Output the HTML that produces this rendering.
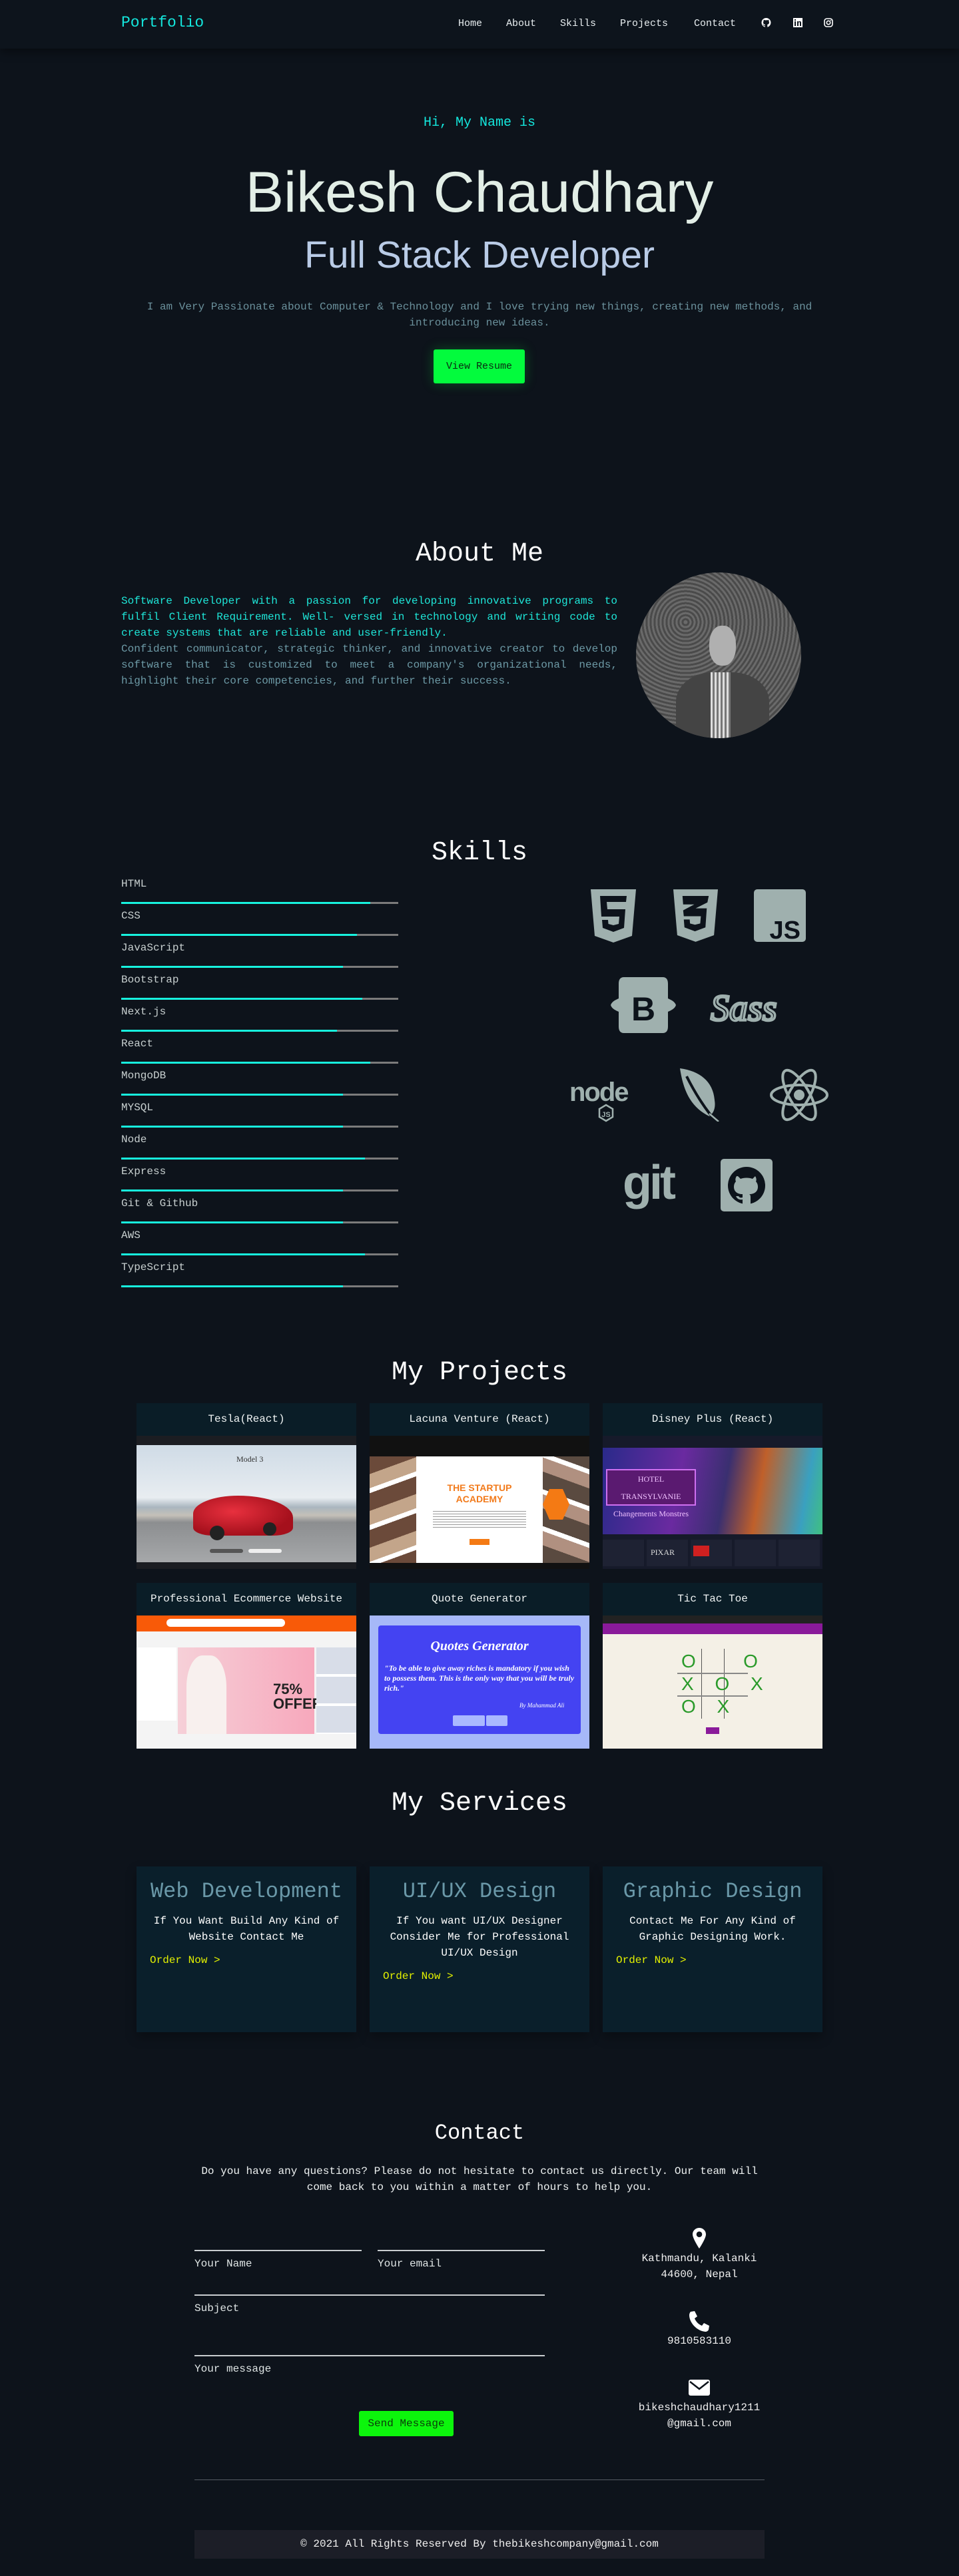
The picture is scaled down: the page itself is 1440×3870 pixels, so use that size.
<!DOCTYPE html>
<html><head><meta charset="utf-8"><style>
*{margin:0;padding:0;box-sizing:border-box}
body{width:1440px;height:3870px;background:#0d131b;position:relative;overflow:hidden;font-family:"Liberation Mono",monospace;color:#fff}
#w{position:absolute;left:0;top:3px;width:1440px;height:3867px}
.a{position:absolute}
.c{text-align:center}
nav{position:absolute;left:0;top:-3px;width:1440px;height:73px;background:#0d141c;box-shadow:0 4px 14px rgba(0,0,0,.45)}
nav .l{position:absolute;top:27px;font-size:15px;color:#e8eef0}
.h2{position:absolute;left:0;width:1440px;text-align:center;font-size:40px;color:#fff;line-height:1}
.lab{position:absolute;left:182px;font-size:16px;color:#c8d0d0;line-height:1}
.bar{position:absolute;left:182px;width:416px;height:3px;background:#7b7b7b}
.bar i{display:block;height:3px;background:#17f2de}
.card{position:absolute;width:330px;background:#0a1d27;overflow:hidden}
.card .t{height:49px;line-height:49px;text-align:center;font-size:16px;color:#f0f4f4}
.card .im{position:absolute;left:0;top:49px;width:330px;height:200px;overflow:hidden}
.sv{position:absolute;width:330px;height:249px;background:#0a1f2b;text-align:center;box-shadow:0 8px 16px rgba(0,0,0,.3)}
.sv h3{font-weight:normal;font-size:32px;color:#6a98a8;margin-top:20px;line-height:36px}
.sv p{font-size:16px;line-height:24px;color:#fff;margin:14px 20px 0}
.sv .o{text-align:left;color:#e3f000;font-size:16px;margin:14px 0 0 20px}
.ul{position:absolute;height:2px;background:#c9cdd0}
.fl{position:absolute;font-size:16px;color:#dfe5e5}
.ri{position:absolute;left:900px;width:300px;text-align:center;font-size:16px;line-height:24px;color:#f0f0f0}
</style></head><body><div id="w">

<nav>
<div class="a" style="left:182px;top:21px;font-size:23px;color:#14e6dc">Portfolio</div>
<div class="l" style="left:688px">Home</div>
<div class="l" style="left:760px">About</div>
<div class="l" style="left:841px">Skills</div>
<div class="l" style="left:931px">Projects</div>
<div class="l" style="left:1042px">Contact</div>
<svg class="a" style="left:1143px;top:27px" width="15" height="14" viewBox="0 0 16 16"><path fill="#fff" d="M8 0a8 8 0 0 0-2.5 15.6c.4 0 .5-.2.5-.4v-1.5C3.8 14.2 3.3 12.7 3.3 12.7c-.4-.9-.9-1.2-.9-1.2-.7-.5.1-.5.1-.5.8.1 1.2.8 1.200.8.7 1.300 1.900.9 2.300.7.1-.5.3-.9.5-1.1-1.8-.2-3.6-.9-3.6-4 0-.9.3-1.600.8-2.100-.1-.2-.4-1 .1-2.100 0 0 .7-.2 2.200.8a7.600 7.600 0 0 1 4 0c1.500-1 2.200-.8 2.200-.8.4 1.100.2 1.900.1 2.100.5.6.8 1.300.8 2.100 0 3.100-1.900 3.800-3.600 4 .3.3.6.8.6 1.500v2.200c0 .2.1.5.6.4A8 8 0 0 0 8 0z"/></svg>
<svg class="a" style="left:1191px;top:27px" width="14" height="14" viewBox="0 0 14 14"><rect width="14" height="14" fill="#fff"/><rect x="2" y="5" width="2" height="7" fill="#0d141c"/><rect x="2" y="2" width="2" height="2" fill="#0d141c"/><path d="M6 5h2v1c.5-.8 1.300-1.100 2-1.100 1.500 0 2 1 2 2.600V12h-2V7.300c0-.7-.3-1-.9-1S8 6.800 8 7.500V12H6z" fill="#0d141c"/></svg>
<svg class="a" style="left:1237px;top:27px" width="14" height="14" viewBox="0 0 14 14"><rect x="1" y="1" width="12" height="12" rx="3.5" fill="none" stroke="#fff" stroke-width="1.6"/><circle cx="7" cy="7" r="2.7" fill="none" stroke="#fff" stroke-width="1.6"/><circle cx="10.4" cy="3.6" r=".8" fill="#fff"/></svg>
</nav>

<div class="a c" style="left:0;width:1440px;top:170px;font-size:20px;color:#14e6dc">Hi, My Name is</div>
<div class="a c" style="left:0;width:1440px;top:236px;font-family:'Liberation Sans',sans-serif;font-size:86px;color:#e2eee6;line-height:100px">Bikesh Chaudhary</div>
<div class="a c" style="left:0;width:1440px;top:345px;font-family:'Liberation Sans',sans-serif;font-size:57px;color:#b9cbe6;line-height:70px">Full Stack Developer</div>
<div class="a c" style="left:200px;width:1040px;top:446px;font-size:16px;line-height:24px;color:#6b919c">I am Very Passionate about Computer &amp; Technology and I love trying new things, creating new methods, and introducing new ideas.</div>
<div class="a" style="left:651px;top:522px;width:137px;height:51px;background:#03fb3d;border-radius:3px;box-shadow:0 0 18px rgba(3,251,61,.25);text-align:center;line-height:51px;font-size:15px;color:#0b2a12">View Resume</div>

<div class="h2" style="top:810px">About Me</div>
<div class="a" style="left:182px;top:888px;width:745px;font-size:16px;line-height:24px;text-align:justify;color:#1ee6d8">Software Developer with a passion for developing innovative programs to fulfil Client Requirement. Well- versed in technology and writing code to create systems that are reliable and user-friendly.</div>
<div class="a" style="left:182px;top:960px;width:745px;font-size:16px;line-height:24px;text-align:justify;color:#6d9aa6">Confident communicator, strategic thinker, and innovative creator to develop software that is customized to meet a company's organizational needs, highlight their core competencies, and further their success.</div>
<div class="a" style="left:955px;top:857px;width:248px;height:249px;border-radius:50%;overflow:hidden;background:repeating-radial-gradient(circle at 30% 30%,#6a6a6a 0 3px,#4a4a4a 3px 6px)">
 <div class="a" style="left:110px;top:80px;width:40px;height:60px;border-radius:45%;background:#b0b0b0"></div>
 <div class="a" style="left:60px;top:150px;width:140px;height:110px;border-radius:40% 40% 0 0;background:#444"></div>
 <div class="a" style="left:112px;top:150px;width:30px;height:100px;background:repeating-linear-gradient(90deg,#ddd 0 3px,#777 3px 6px)"></div>
</div>

<div class="h2" style="top:1259px">Skills</div>
<div class="lab" style="top:1317px">HTML</div><div class="bar" style="top:1352px"><i style="width:90%"></i></div>
<div class="lab" style="top:1365px">CSS</div><div class="bar" style="top:1400px"><i style="width:85%"></i></div>
<div class="lab" style="top:1413px">JavaScript</div><div class="bar" style="top:1448px"><i style="width:80%"></i></div>
<div class="lab" style="top:1461px">Bootstrap</div><div class="bar" style="top:1496px"><i style="width:87%"></i></div>
<div class="lab" style="top:1509px">Next.js</div><div class="bar" style="top:1544px"><i style="width:78%"></i></div>
<div class="lab" style="top:1557px">React</div><div class="bar" style="top:1592px"><i style="width:90%"></i></div>
<div class="lab" style="top:1605px">MongoDB</div><div class="bar" style="top:1640px"><i style="width:80%"></i></div>
<div class="lab" style="top:1653px">MYSQL</div><div class="bar" style="top:1688px"><i style="width:80%"></i></div>
<div class="lab" style="top:1701px">Node</div><div class="bar" style="top:1736px"><i style="width:88%"></i></div>
<div class="lab" style="top:1749px">Express</div><div class="bar" style="top:1784px"><i style="width:80%"></i></div>
<div class="lab" style="top:1797px">Git &amp; Github</div><div class="bar" style="top:1832px"><i style="width:80%"></i></div>
<div class="lab" style="top:1845px">AWS</div><div class="bar" style="top:1880px"><i style="width:88%"></i></div>
<div class="lab" style="top:1893px">TypeScript</div><div class="bar" style="top:1928px"><i style="width:80%"></i></div>

<svg class="a" style="left:887px;top:1333px" width="68" height="80" viewBox="0 0 68 80"><path fill="#9fb0ae" d="M0 0h68l-6 70-28 10-28-10z"/><path fill="#0d131b" d="M14 10h40l-1 9H24l1 11h27l-2 28-16 6-16-6-1-12h9l.5 6 7.5 2 8-2 1-11H16z"/></svg>
<svg class="a" style="left:1011px;top:1333px" width="67" height="79" viewBox="0 0 68 80"><path fill="#9fb0ae" d="M0 0h68l-6 70-28 10-28-10z"/><path fill="#0d131b" d="M14 10h40l-2 10-18 9h17l-2 29-16 6-16-6-1-12h9l.5 6 7.5 2 8-2 1-11H16l-1-9 17-9H15z"/></svg>
<svg class="a" style="left:1132px;top:1333px" width="78" height="79" viewBox="0 0 78 79"><rect width="78" height="79" rx="5" fill="#9fb0ae"/><text x="70" y="74" text-anchor="end" font-family="Liberation Sans,sans-serif" font-weight="bold" font-size="38" fill="#0d131b">JS</text></svg>
<svg class="a" style="left:917px;top:1465px" width="98" height="84" viewBox="0 0 98 84"><path fill="#9fb0ae" d="M20 0h58c6 0 8 4 8 10v22c4 2 10 4 12 10-2 6-8 8-12 10v22c0 6-2 10-8 10H20c-6 0-8-4-8-10V52C8 50 2 48 0 42c2-6 8-8 12-10V10c0-6 2-10 8-10z"/><text x="49" y="65" text-anchor="middle" font-family="Liberation Sans,sans-serif" font-weight="bold" font-size="50" fill="#0d131b">B</text></svg>
<svg class="a" style="left:1065px;top:1462px" width="125" height="90" viewBox="0 0 125 90"><text x="2" y="68" font-family="Liberation Serif,serif" font-style="italic" font-size="56" fill="none" stroke="#9fb0ae" stroke-width="3.5">Sass</text></svg>
<svg class="a" style="left:855px;top:1605px" width="112" height="78" viewBox="0 0 112 78"><text x="0" y="46" font-family="Liberation Sans,sans-serif" font-weight="bold" font-size="40" fill="#9fb0ae" letter-spacing="-2">node</text><path d="M55 52l10 6v12l-10 6-10-6V58z" fill="none" stroke="#9fb0ae" stroke-width="2.5"/><text x="55" y="70" text-anchor="middle" font-family="Liberation Sans,sans-serif" font-weight="bold" font-size="11" fill="#9fb0ae">JS</text></svg>
<svg class="a" style="left:1021px;top:1602px" width="80" height="80" viewBox="0 0 80 80"><path fill="#9fb0ae" d="M0 0c30 4 50 20 52 48 2 12-2 20-8 24C20 60 6 40 0 0z"/><path d="M10 12c10 20 22 40 36 58" stroke="#0d131b" stroke-width="4" fill="none"/><path d="M44 68l14 12" stroke="#9fb0ae" stroke-width="2.5"/></svg>
<svg class="a" style="left:1155px;top:1602px" width="90" height="80" viewBox="-45 -40 90 80"><g fill="none" stroke="#9fb0ae" stroke-width="4"><ellipse rx="42" ry="15"/><ellipse rx="42" ry="15" transform="rotate(60)"/><ellipse rx="42" ry="15" transform="rotate(120)"/></g><circle r="8" fill="#9fb0ae"/></svg>
<svg class="a" style="left:935px;top:1736px" width="95" height="82" viewBox="0 0 95 82"><text x="0" y="62" font-family="Liberation Sans,sans-serif" font-weight="bold" font-size="72" fill="#9fb0ae" letter-spacing="-4">git</text></svg>
<svg class="a" style="left:1082px;top:1738px" width="78" height="79" viewBox="0 0 78 79"><rect width="78" height="79" rx="5" fill="#9fb0ae"/><circle cx="39" cy="40" r="28" fill="#0d131b"/><path fill="#9fb0ae" d="M26 26l4 4c5-2 13-2 18 0l4-4c2 3 2 6 1 8 2 2 3 5 3 8 0 7-5 11-13 11 2 1 2 3 2 5v10h-12v-7c-5 1-8-1-10-5h4c1 2 3 3 6 2v-5c-8 0-13-4-13-11 0-3 1-6 3-8-1-2-1-5 1-8z"/></svg>

<div class="h2" style="top:2040px">My Projects</div>

<div class="card" style="left:205px;top:2105px;height:249px"><div class="t">Tesla(React)</div>
 <div class="im" style="background:#1b1d22">
  <div class="a" style="left:0;top:14px;width:330px;height:176px;background:linear-gradient(#cfdbe6 0,#e8edf1 45%,#aab6bf 53%,#c4c0b8 60%,#8c8e90 66%,#a6a8aa 100%)"></div>
  <div class="a" style="left:150px;top:28px;font-family:'Liberation Serif',serif;font-size:12px;color:#333">Model 3</div>
  <div class="a" style="left:85px;top:90px;width:150px;height:60px;border-radius:45% 55% 20% 20%;background:radial-gradient(ellipse at 40% 40%,#e8303e,#a5101c 70%)"></div>
  <div class="a" style="left:110px;top:135px;width:22px;height:22px;border-radius:50%;background:#222"></div>
  <div class="a" style="left:190px;top:130px;width:20px;height:20px;border-radius:50%;background:#222"></div>
  <div class="a" style="left:110px;top:170px;width:50px;height:6px;border-radius:3px;background:#555"></div>
  <div class="a" style="left:168px;top:170px;width:50px;height:6px;border-radius:3px;background:#eee"></div>
 </div></div>
<div class="card" style="left:555px;top:2105px;height:249px"><div class="t">Lacuna Venture (React)</div>
 <div class="im" style="background:#111">
  <div class="a" style="left:0;top:31px;width:330px;height:160px;background:#fff"></div>
  <div class="a" style="left:0;top:31px;width:70px;height:160px;background:repeating-linear-gradient(160deg,#6b4a3a 0 25px,#c3a58a 25px 45px,#fff 45px 52px)"></div>
  <div class="a" style="left:260px;top:31px;width:70px;height:160px;background:repeating-linear-gradient(20deg,#5a4a40 0 25px,#b09080 25px 45px,#fff 45px 52px)"></div>
  <div class="a" style="left:260px;top:80px;width:40px;height:46px;background:#f47a14;clip-path:polygon(25% 0,75% 0,100% 50%,75% 100%,25% 100%,0 50%)"></div>
  <div class="a c" style="left:80px;width:170px;top:70px;font-family:'Liberation Sans',sans-serif;font-weight:bold;font-size:14px;line-height:17px;color:#f27a1a">THE STARTUP<br>ACADEMY</div>
  <div class="a" style="left:95px;top:110px;width:140px;height:30px;background:repeating-linear-gradient(#fff 0 3px,#999 3px 4px)"></div>
  <div class="a" style="left:150px;top:155px;width:30px;height:9px;background:#f47a14"></div>
 </div></div>
<div class="card" style="left:905px;top:2105px;height:249px"><div class="t">Disney Plus (React)</div>
 <div class="im" style="background:#161a2a">
  <div class="a" style="left:0;top:18px;width:330px;height:130px;background:linear-gradient(100deg,#2a2a8a 0,#6a2aa0 35%,#3a2f70 55%,#c0602a 70%,#3aa0c0 90%,#40c080 100%)"></div>
  <div class="a" style="left:5px;top:50px;width:135px;height:55px;background:#5a1a70;border:2px solid #d070f0;font-family:'Liberation Serif',serif;color:#f0c0ff;font-size:12px;text-align:center;line-height:26px">HOTEL TRANSYLVANIE<br>Changements Monstres</div>
  <div class="a" style="left:0;top:156px;width:330px;height:40px;background:repeating-linear-gradient(90deg,#1e2233 0 62px,#161a2a 62px 66px)"></div>
  <div class="a" style="left:72px;top:168px;font-family:'Liberation Serif',serif;font-size:12px;color:#ddd">PIXAR</div>
  <div class="a" style="left:136px;top:165px;width:24px;height:16px;background:#d02020"></div>
 </div></div>

<div class="card" style="left:205px;top:2375px;height:249px"><div class="t">Professional Ecommerce Website</div>
 <div class="im" style="background:#f4f4f4">
  <div class="a" style="left:0;top:0;width:330px;height:24px;background:#f85a08"></div>
  <div class="a" style="left:45px;top:5px;width:178px;height:12px;border-radius:6px;background:#fff"></div>
  <div class="a" style="left:0;top:48px;width:60px;height:110px;background:#fff"></div>
  <div class="a" style="left:62px;top:48px;width:205px;height:130px;background:linear-gradient(90deg,#f6d0d8,#f7a8bc)"></div>
  <div class="a" style="left:75px;top:60px;width:60px;height:118px;border-radius:40% 40% 0 0;background:#f8f0ee"></div>
  <div class="a" style="left:205px;top:100px;font-family:'Liberation Sans',sans-serif;font-weight:bold;font-size:22px;line-height:22px;color:#222">75%<br>OFFER</div>
  <div class="a" style="left:270px;top:48px;width:60px;height:130px;background:repeating-linear-gradient(#d8dde8 0 40px,#fff 40px 44px)"></div>
 </div></div>
<div class="card" style="left:555px;top:2375px;height:249px"><div class="t">Quote Generator</div>
 <div class="im" style="background:#a6b8f8">
  <div class="a" style="left:13px;top:15px;width:304px;height:163px;border-radius:4px;background:#4443f2"></div>
  <div class="a c" style="left:13px;width:304px;top:35px;font-family:'Liberation Serif',serif;font-style:italic;font-weight:bold;font-size:20px;color:#fff">Quotes Generator</div>
  <div class="a" style="left:22px;width:290px;top:72px;font-family:'Liberation Serif',serif;font-style:italic;font-weight:bold;font-size:12px;line-height:15px;color:#fff">"To be able to give away riches is mandatory if you wish to possess them. This is the only way that you will be truly rich."</div>
  <div class="a" style="left:225px;top:130px;font-family:'Liberation Serif',serif;font-style:italic;font-size:9px;color:#fff">By Mahammad Ali</div>
  <div class="a" style="left:125px;top:150px;width:48px;height:16px;background:#aab8ff;border-radius:2px"></div>
  <div class="a" style="left:175px;top:150px;width:32px;height:16px;background:#aab8ff;border-radius:2px"></div>
 </div></div>
<div class="card" style="left:905px;top:2375px;height:249px"><div class="t">Tic Tac Toe</div>
 <div class="im" style="background:#f4f0e6">
  <div class="a" style="left:0;top:0;width:330px;height:12px;background:#222"></div>
  <div class="a" style="left:0;top:12px;width:330px;height:16px;background:#8a1a9a"></div>
  <div class="a" style="left:148px;top:50px;width:1px;height:105px;background:#555"></div>
  <div class="a" style="left:182px;top:50px;width:1px;height:105px;background:#555"></div>
  <div class="a" style="left:112px;top:86px;width:106px;height:2px;background:#888"></div>
  <div class="a" style="left:112px;top:120px;width:106px;height:2px;background:#888"></div>
  <div class="a" style="left:118px;top:52px;font-family:'Liberation Sans',sans-serif;font-size:28px;line-height:34px;color:#2a9a2a;letter-spacing:12px;white-space:pre">O   O<br>X O X<br>O X</div>
  <div class="a" style="left:155px;top:168px;width:20px;height:10px;background:#8a1a9a"></div>
 </div></div>

<div class="h2" style="top:2687px">My Services</div>
<div class="sv" style="left:205px;top:2801px"><h3>Web Development</h3><p>If You Want Build Any Kind of Website Contact Me</p><div class="o">Order Now &gt;</div></div>
<div class="sv" style="left:555px;top:2801px"><h3>UI/UX Design</h3><p>If You want UI/UX Designer Consider Me for Professional UI/UX Design</p><div class="o">Order Now &gt;</div></div>
<div class="sv" style="left:905px;top:2801px"><h3>Graphic Design</h3><p>Contact Me For Any Kind of Graphic Designing Work.</p><div class="o">Order Now &gt;</div></div>

<div class="a c" style="left:0;width:1440px;top:3183px;font-size:32px;color:#fff">Contact</div>
<div class="a c" style="left:290px;width:860px;top:3247px;font-size:16px;line-height:24px;color:#eef2f2">Do you have any questions? Please do not hesitate to contact us directly. Our team will come back to you within a matter of hours to help you.</div>

<div class="ul" style="left:292px;top:3377px;width:251px"></div>
<div class="ul" style="left:567px;top:3377px;width:251px"></div>
<div class="fl" style="left:292px;top:3389px">Your Name</div>
<div class="fl" style="left:567px;top:3389px">Your email</div>
<div class="ul" style="left:292px;top:3444px;width:526px"></div>
<div class="fl" style="left:292px;top:3456px">Subject</div>
<div class="ul" style="left:292px;top:3535px;width:526px"></div>
<div class="fl" style="left:292px;top:3547px">Your message</div>
<div class="a" style="left:539px;top:3619px;width:142px;height:38px;background:#0cf50c;border-radius:3px;text-align:center;line-height:38px;font-size:16px;color:#0a3a0a">Send Message</div>

<svg class="a" style="left:1040px;top:3344px" width="20" height="31" viewBox="0 0 20 31"><path fill="#fff" d="M10 0C4.5 0 0 4.3 0 9.7 0 16 10 31 10 31s10-15 10-21.3C20 4.3 15.5 0 10 0zm0 14a4.3 4.3 0 1 1 0-8.6 4.3 4.3 0 0 1 0 8.6z"/></svg>
<div class="ri" style="top:3378px">Kathmandu, Kalanki<br>44600, Nepal</div>
<svg class="a" style="left:1034px;top:3468px" width="32" height="32" viewBox="0 0 32 32"><path fill="#fff" d="M3 2l6-1 4 8-4 3c2 5 6 9 11 11l3-4 8 4-1 6c-1 2-3 3-5 3C13 31 1 19 1 7c0-2 1-4 2-5z"/></svg>
<div class="ri" style="top:3502px">9810583110</div>
<svg class="a" style="left:1034px;top:3572px" width="32" height="24" viewBox="0 0 32 24"><rect width="32" height="24" rx="3" fill="#fff"/><path d="M2 3l14 11L30 3" fill="none" stroke="#0d131b" stroke-width="2.5"/></svg>
<div class="ri" style="top:3602px">bikeshchaudhary1211<br>@gmail.com</div>

<div class="a" style="left:292px;top:3722px;width:856px;height:1px;background:#555c64"></div>
<div class="a c" style="left:292px;top:3798px;width:856px;height:43px;background:#1c1e27;line-height:43px;font-size:16px;color:#f0f0f0">&#169; 2021 All Rights Reserved By thebikeshcompany@gmail.com</div>

</div></body></html>
